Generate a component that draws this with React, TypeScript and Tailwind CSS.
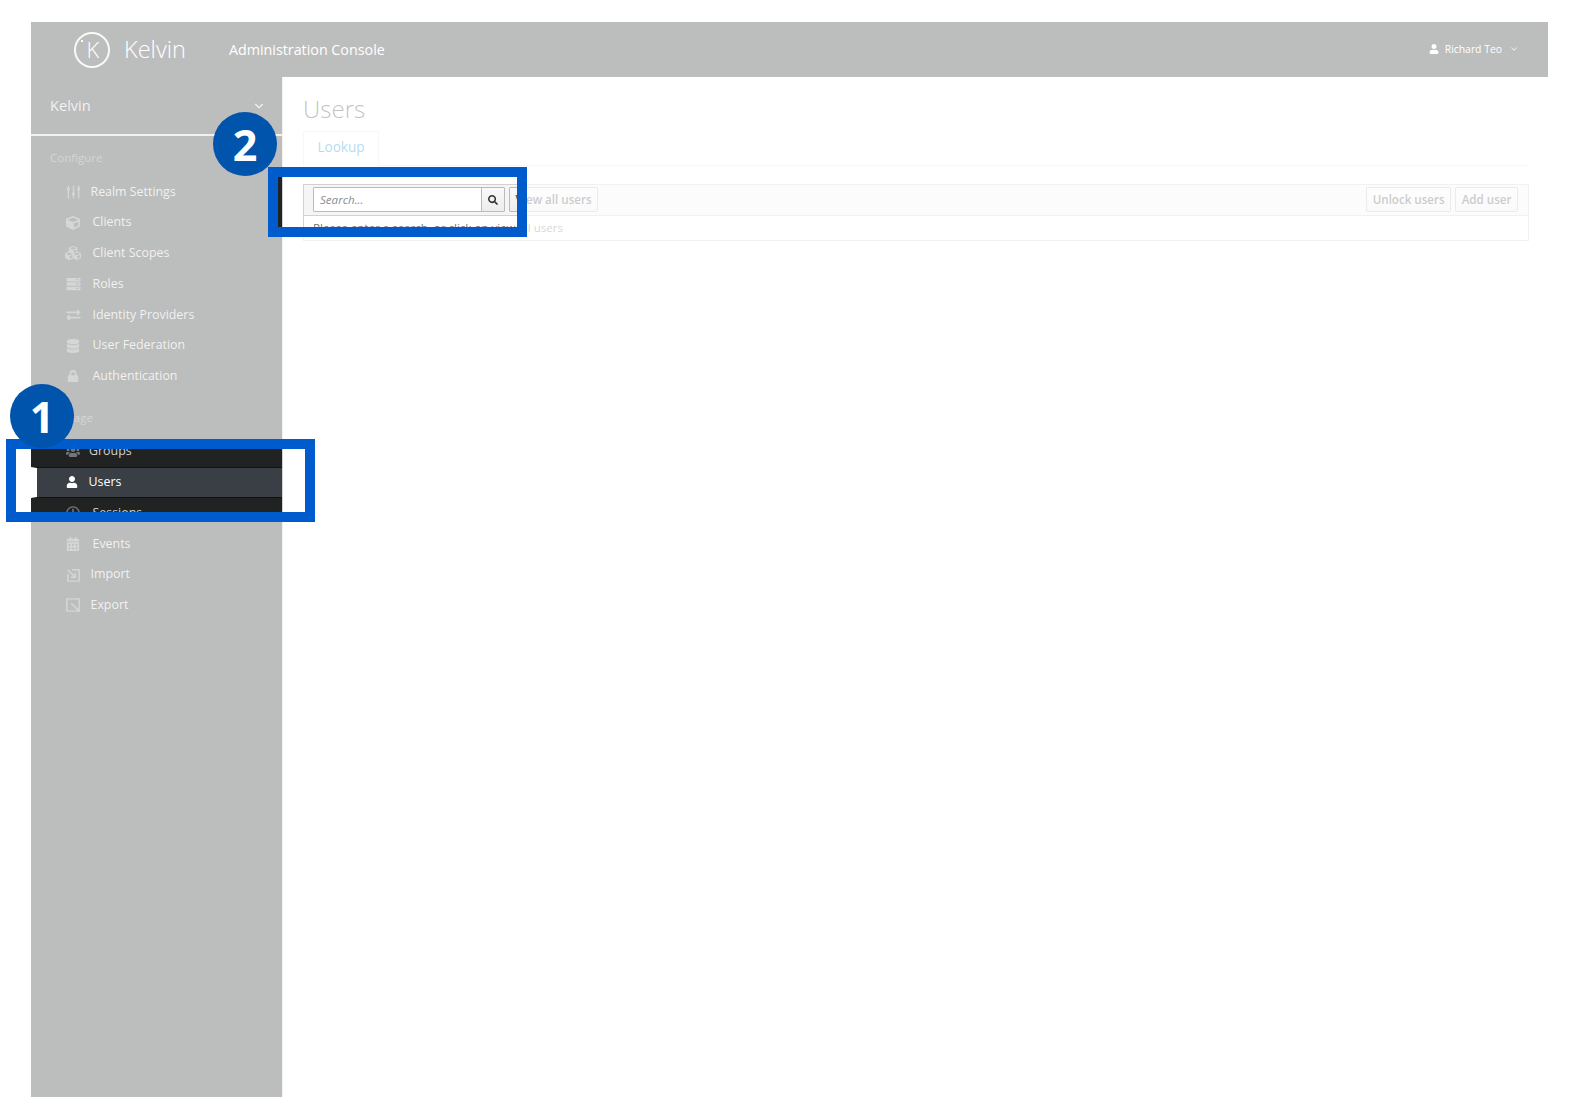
import { ChevronDown } from "lucide-react";
import {
  FaCalendarAlt,
  FaCube,
  FaCubes,
  FaDatabase,
  FaExchangeAlt,
  FaLock,
  FaRegClock,
  FaSearch,
  FaServer,
  FaUser,
  FaUsers,
} from "react-icons/fa";

function SlidersIcon() {
  return (
    <svg viewBox="0 0 16 16" className="h-[16px] w-[15px]" fill="none" stroke="currentColor" strokeWidth="1.4">
      <path d="M2.5 1V15M8 1V15M13.5 1V15" />
      <path d="M1 5H4M6.5 10H9.5M12 5H15" strokeWidth="3" />
    </svg>
  );
}

function ImportIcon() {
  return (
    <svg viewBox="0 0 16 16" className="h-[14px] w-[14px]" fill="none" stroke="currentColor" strokeWidth="1.7">
      <path d="M2 7V15H15V2H7" />
      <path d="M2 2L10.5 10.5M10.5 5.5V10.5H5.5" />
    </svg>
  );
}

function ExportIcon() {
  return (
    <svg viewBox="0 0 16 16" className="h-[14px] w-[14px]" fill="none" stroke="currentColor" strokeWidth="1.7">
      <path d="M9 15H1V1H15V9" />
      <path d="M6 6L15 15M15 9.5V15H9.5" />
    </svg>
  );
}

const configureItems = [
  { label: "Realm Settings", gap: "gap-[9.5px]", icon: <SlidersIcon /> },
  { label: "Clients", gap: "gap-[11.5px]", icon: <FaCube className="h-[14px] w-[14px]" /> },
  { label: "Client Scopes", gap: "gap-[11.5px]", icon: <FaCubes className="h-[16px] w-[16px]" /> },
  { label: "Roles", gap: "gap-[11.5px]", icon: <FaServer className="h-[14px] w-[15px]" /> },
  { label: "Identity Providers", gap: "gap-[11.5px]", icon: <FaExchangeAlt className="h-[14px] w-[15px]" /> },
  { label: "User Federation", gap: "gap-[11.5px]", icon: <FaDatabase className="h-[14px] w-[14px]" /> },
  { label: "Authentication", gap: "gap-[11.5px]", icon: <FaLock className="h-[12px] w-[12px]" /> },
];

const manageItems = [
  { label: "Groups", gap: "gap-[8px]", icon: <FaUsers className="h-[14px] w-[14px]" /> },
  { label: "Users", gap: "gap-[9.5px]", icon: <FaUser className="h-[12px] w-[12px]" />, active: true },
  { label: "Sessions", gap: "gap-[11.5px]", icon: <FaRegClock className="h-[14px] w-[14px]" /> },
  { label: "Events", gap: "gap-[11.5px]", icon: <FaCalendarAlt className="h-[14px] w-[14px]" /> },
  { label: "Import", gap: "gap-[9.5px]", icon: <ImportIcon /> },
  { label: "Export", gap: "gap-[9.5px]", icon: <ExportIcon /> },
];

type Item = { label: string; gap: string; icon: React.ReactNode; active?: boolean };

function NavRow({ item }: { item: Item }) {
  return (
    <div
      className={
        item.active
          ? `box-border flex h-[30.75px] items-center border-y border-l-[6px] border-y-[#111312] border-l-white bg-[#393f44] pl-[28px] text-white ${item.gap}`
          : `flex h-[30.75px] items-center pl-[34px] text-[#d1d1d1] ${item.gap}`
      }
    >
      <span className={item.active ? "flex w-[14px] justify-center text-white" : "flex w-[16px] justify-center text-[#72767b]"}>
        {item.icon}
      </span>
      <span className="text-[12.4px]">{item.label}</span>
    </div>
  );
}

function Button({ children }: { children: React.ReactNode }) {
  return (
    <button className="h-[25px] rounded-[1px] border border-[#bbbbbb] bg-gradient-to-b from-[#fafafa] to-[#ededed] px-[5.5px] text-[11.6px] font-semibold text-[#4d5258]">
      {children}
    </button>
  );
}

function Sidebar() {
  return (
    <aside className="w-[252px] shrink-0 border-r border-r-[#d1d1d1] bg-[#212322]">
      <div className="flex h-[59px] items-center justify-between border-b-2 border-b-[#d1d1d1] pr-[16px] pl-[19px] text-[14.6px] text-[#d1d1d1]">
        <span>Kelvin</span>
        <ChevronDown className="h-[14px] w-[14px]" />
      </div>
      <div className="flex h-[40.5px] items-center pt-[3.5px] pl-[19px] text-[11.5px] text-[#72767b]">Configure</div>
      {configureItems.map((item) => (
        <NavRow key={item.label} item={item} />
      ))}
      <div className="flex h-[44.5px] items-center pt-[7px] pl-[19px] text-[11.5px] text-[#72767b]">Manage</div>
      {manageItems.map((item) => (
        <NavRow key={item.label} item={item} />
      ))}
    </aside>
  );
}

function Header() {
  return (
    <header className="flex h-[55px] items-center bg-[#212322] text-white">
      <div className="ml-[43px] flex h-[36px] w-[36px] items-center justify-center rounded-full border-2 border-[#e8e8e8] text-[22px] font-light">
        <span className="relative pl-[2px]">
          <span className="absolute top-[7px] -left-[4px] h-[2px] w-[2px] bg-white" />K
        </span>
      </div>
      <span className="ml-[14px] text-[23.5px] font-light">Kelvin</span>
      <span className="ml-[43px] pt-[1px] text-[14.3px]">Administration Console</span>
      <div className="mr-[29px] ml-auto flex items-center text-[10.4px]">
        <FaUser className="h-[10px] w-[10px]" />
        <span className="ml-[6px]">Richard Teo</span>
        <ChevronDown className="ml-[7px] h-[10px] w-[10px]" />
      </div>
    </header>
  );
}

function Content() {
  return (
    <main className="flex-1 pr-[19px] pl-[20px]">
      <h1 className="h-[54px] pt-[14px] text-[24px] leading-[36px] font-light text-[#333333]">Users</h1>
      <div className="flex h-[35px] border-b border-b-[#e4e4e4]">
        <div className="flex h-[35px] w-[76px] items-center justify-center border-x border-t border-[#e4e4e4] bg-white pb-[4px] text-[13.6px] text-[#0088ce]">
          Lookup
        </div>
      </div>
      <div className="mt-[18px] border border-[#d1d1d1]">
        <div className="flex h-[31px] items-center border-b border-b-[#d1d1d1] bg-[#f5f5f5] pr-[10px] pb-[1px] pl-[9px]">
          <div className="flex h-[25px] w-[192px] rounded-[1px] border border-[#bbbbbb] bg-white">
            <span className="flex-1 pl-[6px] text-[11.6px] leading-[23px] text-[#8b8d8f] italic">Search...</span>
            <span className="flex w-[23px] items-center justify-center border-l border-l-[#bbbbbb] bg-gradient-to-b from-[#fafafa] to-[#ededed] text-[#333333]">
              <FaSearch className="h-[10px] w-[10px]" />
            </span>
          </div>
          <div className="ml-[4px] flex">
            <Button>View all users</Button>
          </div>
          <div className="ml-auto flex gap-[4px]">
            <Button>Unlock users</Button>
            <Button>Add user</Button>
          </div>
        </div>
        <div className="h-[24px] pl-[9px] text-[11.55px] leading-[24px] text-[#72767b]">
          Please enter a search, or click on view all users
        </div>
      </div>
    </main>
  );
}

export default function App() {
  return (
    <div className="relative h-[1120px] w-[1580px] overflow-hidden bg-white font-['Open_Sans',sans-serif]">
      <div className="pt-[22px] pl-[31px]">
        <div className="flex h-[1075px] w-[1517px] flex-col">
          <Header />
          <div className="flex flex-1">
            <Sidebar />
            <Content />
          </div>
        </div>
      </div>

      {/* dimming layer with the two spotlight holes cut out */}
      <div className="absolute inset-0 bg-white/70 [clip-path:path(evenodd,'M0_0H1580V1120H0Z_M16_449H305V512H16Z_M278_177H517V227H278Z')]" />

      <div className="absolute top-[439px] left-[6px] h-[83px] w-[309px] border-[10px] border-[#005ccc]" />
      <div className="absolute top-[167px] left-[268px] h-[70px] w-[259px] border-[10px] border-[#005ccc]" />

      <div className="absolute top-[384px] left-[10px] flex h-[64px] w-[64px] items-center justify-center rounded-full bg-[#0054ab] text-[43px] leading-none font-bold text-white">
        1
      </div>
      <div className="absolute top-[112px] left-[213px] flex h-[64px] w-[64px] items-center justify-center rounded-full bg-[#0054ab] text-[43px] leading-none font-bold text-white">
        2
      </div>
    </div>
  );
}
